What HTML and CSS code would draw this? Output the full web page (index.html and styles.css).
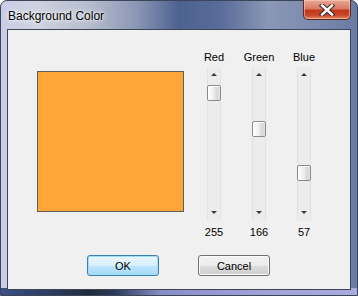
FILE: index.html
```html
<!DOCTYPE html>
<html lang="en">
<head>
    <meta charset="UTF-8">
    <title>Background Color</title>
    <link rel="stylesheet" href="styles.css">
</head>
<body>
    <div class="window">
        <div class="titlebar">
            <span class="title">Background Color</span>
            <div class="close">
                <svg width="18" height="12" viewBox="0 0 18 12">
                    <path d="M4 1.5 L14 10.5 M14 1.5 L4 10.5" stroke="#3a2a2a" stroke-width="4.4" stroke-linecap="square"/>
                    <path d="M4 1.5 L14 10.5 M14 1.5 L4 10.5" stroke="#ffffff" stroke-width="2.4" stroke-linecap="square"/>
                </svg>
            </div>
        </div>
        <div class="client">
            <div class="content">
                <div class="swatch" style="background: rgb(255, 166, 57);"></div>
                <div class="sliders">
                    <div class="channel">
                        <div class="label">Red</div>
                        <div class="track">
                            <span class="arrow up"></span>
                            <span class="thumb" style="top: 18px;"></span>
                            <span class="arrow down"></span>
                        </div>
                        <div class="value">255</div>
                    </div>
                    <div class="channel">
                        <div class="label">Green</div>
                        <div class="track">
                            <span class="arrow up"></span>
                            <span class="thumb" style="top: 54px;"></span>
                            <span class="arrow down"></span>
                        </div>
                        <div class="value">166</div>
                    </div>
                    <div class="channel">
                        <div class="label">Blue</div>
                        <div class="track">
                            <span class="arrow up"></span>
                            <span class="thumb" style="top: 98px;"></span>
                            <span class="arrow down"></span>
                        </div>
                        <div class="value">57</div>
                    </div>
                </div>
            </div>
            <div class="buttons">
                <div class="btn default">OK</div>
                <div class="btn">Cancel</div>
            </div>
        </div>
    </div>
</body>
</html>
```

FILE: styles.css
```css
* {
    box-sizing: border-box;
    margin: 0;
    padding: 0;
}

body {
    width: 358px;
    height: 296px;
    overflow: hidden;
    font-family: "Liberation Sans", Arial, sans-serif;
    font-size: 11px;
    background: #ffffff;
}

.window {
    display: flex;
    flex-direction: column;
    width: 358px;
    height: 296px;
    border: 1px solid #3b4458;
    border-radius: 7px 7px 0 0;
    background:
        linear-gradient(to right, #3a5088 0%, #1f2b3a 25%, #2a3a58 32%, #8a8ec8 45%, #a0a2d8 75%, #a7abe0 100%) bottom / 100% 7px no-repeat,
        linear-gradient(to right, #c9cde6 0%, #cfd2df 10%, #b6bccd 25%, #8b97b5 38%, #4d6190 50%, #5a6d99 62%, #8a97b6 75%, #7f8db0 85%, #6a7ca4 100%);
}

.titlebar {
    display: flex;
    align-items: flex-start;
    justify-content: space-between;
    height: 28px;
    padding-left: 7px;
}

.title {
    margin-top: 8px;
    font-family: "Liberation Sans", Arial, sans-serif;
    font-size: 12px;
    color: #000000;
    text-shadow: 0 0 6px #ffffff, 0 0 3px #ffffff;
}

.close {
    display: flex;
    align-items: center;
    justify-content: center;
    width: 48px;
    height: 20px;
    margin-right: 6px;
    margin-top: -1px;
    border: 1px solid #5a2a24;
    border-top: none;
    border-radius: 0 0 5px 5px;
    background: linear-gradient(#e9a898 0%, #d97a62 45%, #c2381c 55%, #c8462a 80%, #e08a60 100%);
    box-shadow: inset 0 0 0 1px rgba(255, 220, 200, 0.5);
}

.client {
    display: flex;
    flex-direction: column;
    height: 261px;
    margin: 0 6px 0 6px;
    border: 1px solid #3d4656;
    background: #f0f0f0;
}

.content {
    display: flex;
    align-items: flex-start;
    padding-top: 21px;
    padding-left: 29px;
}

.swatch {
    width: 147px;
    height: 141px;
    margin-top: 20px;
    border: 1px solid #5e5e5e;
}

.sliders {
    display: flex;
    gap: 1px;
    margin-left: 8px;
}

.channel {
    display: flex;
    flex-direction: column;
    align-items: center;
    width: 44px;
}

.label {
    height: 13px;
    line-height: 13px;
    color: #000000;
}

.track {
    position: relative;
    display: flex;
    flex-direction: column;
    align-items: center;
    justify-content: space-between;
    width: 14px;
    height: 154px;
    margin-top: 3px;
    padding: 6px 0 7px;
    background: #ececec;
    border-left: 1px solid #e2e2e2;
    border-right: 1px solid #e2e2e2;
}

.arrow {
    width: 0;
    height: 0;
    border-left: 3px solid transparent;
    border-right: 3px solid transparent;
}

.arrow.up {
    border-bottom: 3px solid #3c3c3c;
}

.arrow.down {
    border-top: 3px solid #3c3c3c;
}

.thumb {
    position: absolute;
    left: -1px;
    width: 14px;
    height: 16px;
    border: 1px solid #8a8a8a;
    border-radius: 2px;
    background: linear-gradient(to right, #ffffff 0%, #f2f2f2 40%, #d6d6d6 80%, #e6e6e6 100%);
    box-shadow: inset 1px 1px 0 #ffffff;
}

.value {
    height: 13px;
    line-height: 13px;
    margin-top: 5px;
    color: #000000;
}

.buttons {
    display: flex;
    gap: 39px;
    margin-top: 16px;
    padding-left: 79px;
}

.btn {
    display: flex;
    align-items: center;
    justify-content: center;
    width: 72px;
    height: 21px;
    border: 1px solid #707070;
    border-radius: 3px;
    background: linear-gradient(#f2f2f2 0%, #ebebeb 50%, #dddddd 51%, #cfcfcf 100%);
    box-shadow: inset 0 0 0 1px #fbfbfb;
    color: #000000;
}

.btn.default {
    border-color: #3c7fb1;
    background: linear-gradient(#eaf6fd 0%, #d9f0fc 50%, #bee6fd 51%, #a7d9f5 100%);
    box-shadow: inset 0 0 0 1px #9ee0fb;
}
```
